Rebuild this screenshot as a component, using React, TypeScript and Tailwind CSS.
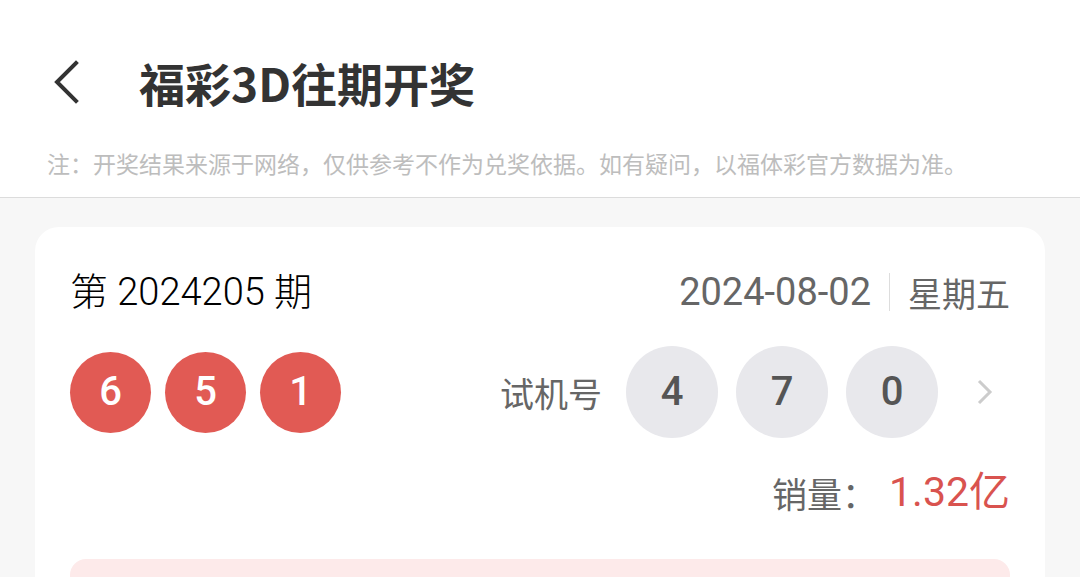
import React from "react";

const CJK = '"Noto Sans CJK SC", "Noto Sans", sans-serif';
const NUM = 'Roboto, "Noto Sans CJK SC", sans-serif';

function Ball({ n, red }: { n: string; red?: boolean }) {
  if (red) {
    return (
      <div className="flex h-[81px] w-[81px] items-center justify-center rounded-full bg-[#e15a54] text-[40px] font-medium text-white" style={{ fontFamily: NUM }}>
        {n}
      </div>
    );
  }
  return (
    <div className="flex h-[92px] w-[92px] items-center justify-center rounded-full bg-[#e8e8ec] text-[40px] font-medium text-[#555]" style={{ fontFamily: NUM }}>
      {n}
    </div>
  );
}

export default function App() {
  return (
    <div className="h-[577px] w-[1080px] overflow-hidden bg-[#f7f7f7]" style={{ fontFamily: CJK }}>
      <div className="h-[198px] border-b border-[#dcdcdc] bg-white">
        <div className="flex h-[126px] items-center pt-[38px] pb-0">
          <div className="ml-[52px] flex h-[48px] w-[30px] items-center">
            <svg width="28" height="44" viewBox="0 0 28 44" fill="none">
              <path d="M24 3 L5 22 L24 41" stroke="#333" strokeWidth="4" strokeLinecap="square" />
            </svg>
          </div>
          <div className="ml-[57px] text-[46px] font-bold leading-none text-[#333]">福彩3D往期开奖</div>
        </div>
        <div className="mt-[26px] pl-[47px] text-[23px] leading-none text-[#bdbdbd]">
          注：开奖结果来源于网络，仅供参考不作为兑奖依据。如有疑问，以福体彩官方数据为准。
        </div>
      </div>
      <div className="px-[35px] pt-[29px]">
        <div className="rounded-[24px] bg-white px-[35px] pt-[40px] pb-[40px]">
          <div className="flex h-[50px] items-center justify-between">
            <div className="text-[38px] font-light text-black" style={{ fontFamily: NUM }}>
              第 2024205 期
            </div>
            <div className="flex items-center text-[#666]">
              <span className="text-[38px]" style={{ fontFamily: NUM }}>2024-08-02</span>
              <span className="mx-[18px] h-[38px] w-px bg-[#ddd]" />
              <span className="text-[34px]">星期五</span>
            </div>
          </div>
          <div className="mt-[29px] flex h-[92px] items-center justify-between">
            <div className="flex gap-[14px]">
              <Ball n="6" red />
              <Ball n="5" red />
              <Ball n="1" red />
            </div>
            <div className="flex items-center">
              <span className="mr-[24px] text-[34px] text-[#666]">试机号</span>
              <div className="flex gap-[18px]">
                <Ball n="4" />
                <Ball n="7" />
                <Ball n="0" />
              </div>
              <svg className="ml-[39px] mr-[17px]" width="16" height="26" viewBox="0 0 16 26" fill="none">
                <path d="M2 2 L13 13 L2 24" stroke="#cccccc" strokeWidth="3" />
              </svg>
            </div>
          </div>
          <div className="mt-[30px] flex h-[50px] items-center justify-end">
            <span className="text-[35px] text-[#666]">销量：</span>
            <span className="ml-[12px] text-[41px] text-[#d9534f]" style={{ fontFamily: NUM }}>1.32亿</span>
          </div>
          <div className="mt-[41px] h-[120px] rounded-[16px] bg-[#fdeaea]" />
        </div>
      </div>
    </div>
  );
}
